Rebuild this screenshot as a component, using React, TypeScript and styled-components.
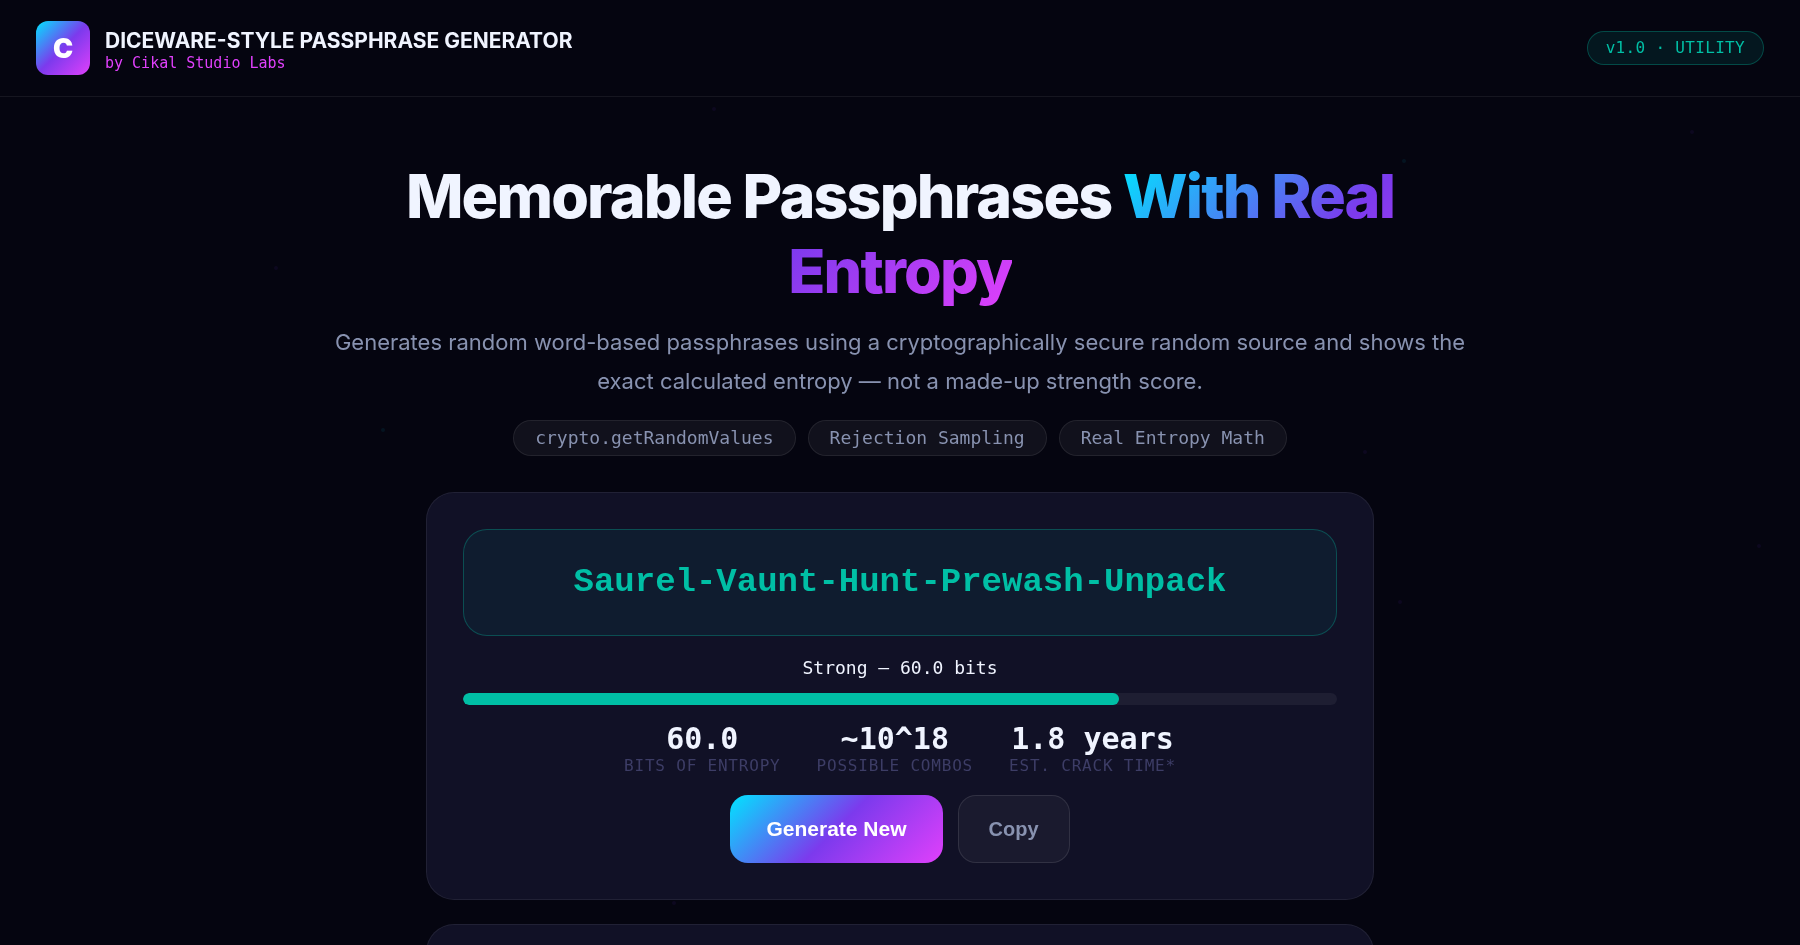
import React, { useState } from "react";
import styled, { createGlobalStyle, css } from "styled-components";

const sans = `Inter, "Liberation Sans", sans-serif`;
const mono = `"DejaVu Sans Mono", "Liberation Mono", monospace`;
const brandGradient = "linear-gradient(135deg, #00e5ff, #7c3aed 50%, #e040fb)";

const GlobalStyle = createGlobalStyle`
  *, *::before, *::after { box-sizing: border-box; }
  html { background: #050510; scrollbar-width: none; }
  body {
    margin: 0;
    font-family: ${sans};
    color: #f0f4ff;
    -webkit-font-smoothing: antialiased;
  }
  h1, p, dl, dd, dt { margin: 0; }
`;

const Particles = styled.svg`
  position: fixed;
  inset: 0;
  width: 100%;
  height: 100%;
  z-index: -1;
`;

const Header = styled.header`
  display: flex;
  align-items: center;
  justify-content: space-between;
  padding: 21px 36px;
  border-bottom: 1px solid rgba(255, 255, 255, 0.07);
`;

const Brand = styled.div`
  display: flex;
  align-items: center;
  gap: 15px;
`;

const Logo = styled.div`
  display: flex;
  align-items: center;
  justify-content: center;
  width: 54px;
  height: 54px;
  border-radius: 12px;
  background: ${brandGradient};
  color: #fff;
  font-size: 27px;
  font-weight: 900;
`;

const BrandTitle = styled.div`
  padding-top: 4px;
  font-size: 21px;
  line-height: 25px;
  font-weight: 700;
`;

const BrandBy = styled.div`
  font-family: ${mono};
  font-size: 15px;
  line-height: 20px;
  color: #e040fb;
`;

const Version = styled.span`
  padding: 7px 18px;
  border: 1px solid rgba(0, 191, 165, 0.3);
  border-radius: 36px;
  background: rgba(0, 191, 165, 0.1);
  color: #00bfa5;
  font-family: ${mono};
  font-size: 16px;
  line-height: 18px;
  letter-spacing: 0.02em;
`;

const Main = styled.main`
  display: flex;
  flex-direction: column;
  align-items: center;
  padding: 62px 36px 72px;
`;

const Headline = styled.h1`
  max-width: 1116px;
  font-size: 61px;
  line-height: 75px;
  font-weight: 800;
  letter-spacing: -0.03em;
  text-align: center;
`;

const Gradient = styled.span`
  background: ${brandGradient};
  background-clip: text;
  -webkit-background-clip: text;
  color: transparent;
`;

const Lead = styled.p`
  max-width: 1134px;
  margin-top: 14px;
  color: #8892b0;
  font-size: 22px;
  line-height: 39px;
  text-align: center;
`;

const Tags = styled.div`
  display: flex;
  flex-wrap: wrap;
  justify-content: center;
  gap: 12px;
  margin: 19px 0 36px;
`;

const Tag = styled.span`
  padding: 7px 21px;
  border: 1px solid rgba(255, 255, 255, 0.08);
  border-radius: 36px;
  background: rgba(255, 255, 255, 0.05);
  color: #8892b0;
  font-family: ${mono};
  font-size: 18px;
  line-height: 20px;
`;

const Card = styled.section`
  width: 100%;
  max-width: 948px;
  min-height: 144px;
  padding: 36px;
  border: 1px solid rgba(255, 255, 255, 0.07);
  border-radius: 28px;
  background: #111126;

  & + & {
    margin-top: 24px;
  }
`;

const Passphrase = styled.output`
  display: block;
  padding: 30px 36px;
  border: 1px solid rgba(0, 191, 165, 0.3);
  border-radius: 24px;
  background: rgba(0, 191, 165, 0.07);
  color: #00bfa5;
  font-family: "Courier New", "Liberation Mono", monospace;
  font-size: 34px;
  line-height: 45px;
  font-weight: 700;
  text-align: center;
`;

const Strength = styled.p`
  margin-top: 20px;
  font-family: ${mono};
  font-size: 18px;
  line-height: 24px;
  text-align: center;
`;

const Meter = styled.div`
  height: 12px;
  margin-top: 13px;
  border-radius: 6px;
  background: #1e1e32;
  overflow: hidden;
`;

const MeterFill = styled.div`
  height: 100%;
  border-radius: 6px;
  background: #00bfa5;
`;

const Stats = styled.dl`
  display: flex;
  flex-wrap: wrap;
  justify-content: center;
  gap: 36px;
  margin-top: 17px;
`;

const Stat = styled.div`
  display: flex;
  flex-direction: column-reverse;
  align-items: center;
  font-family: ${mono};
`;

const StatValue = styled.dd`
  font-size: 30px;
  line-height: 34px;
  font-weight: 700;
`;

const StatLabel = styled.dt`
  color: #3d3d66;
  font-size: 16px;
  line-height: 20px;
  letter-spacing: 0.05em;
  text-transform: uppercase;
`;

const Actions = styled.div`
  display: flex;
  flex-wrap: wrap;
  justify-content: center;
  gap: 15px;
  margin-top: 19px;
`;

const Button = styled.button<{ $primary?: boolean }>`
  padding: 21px 30px;
  border: 1px solid rgba(255, 255, 255, 0.1);
  border-radius: 18px;
  background: #1a1a2e;
  color: #8892b0;
  font-family: "Liberation Sans", Arial, sans-serif;
  font-size: 20px;
  line-height: 24px;
  font-weight: 700;
  cursor: pointer;

  ${({ $primary }) =>
    $primary &&
    css`
      padding: 22px 36px;
      border: 0;
      background: ${brandGradient};
      color: #fff;
      font-size: 21px;
    `}
`;

const particles = [
  { x: 1692, y: 132, fill: "#7c3aed" },
  { x: 1404, y: 161, fill: "#00e5ff" },
  { x: 714, y: 109, fill: "#7c3aed" },
  { x: 276, y: 268, fill: "#7c3aed" },
  { x: 383, y: 430, fill: "#00e5ff" },
  { x: 1365, y: 452, fill: "#7c3aed" },
  { x: 1759, y: 546, fill: "#7c3aed" },
  { x: 1400, y: 602, fill: "#7c3aed" },
  { x: 674, y: 903, fill: "#7c3aed" },
];

const stats = [
  { label: "Bits of entropy", value: "60.0" },
  { label: "Possible combos", value: "~10^18" },
  { label: "Est. crack time*", value: "1.8 years" },
];

const samples = [
  "Saurel-Vaunt-Hunt-Prewash-Unpack",
  "Cobalt-Ridge-Lamp-Thistle-Marble",
  "Walnut-Crisp-Tide-Orchard-Beacon",
];

export default function App() {
  const [index, setIndex] = useState(0);
  const passphrase = samples[index];
  const strength = 75;

  return (
    <>
      <GlobalStyle />
      <Particles aria-hidden="true">
        {particles.map((p) => (
          <circle key={`${p.x}-${p.y}`} cx={p.x} cy={p.y} r={2} fill={p.fill} opacity={0.07} />
        ))}
      </Particles>
      <Header>
        <Brand>
          <Logo>C</Logo>
          <div>
            <BrandTitle>DICEWARE-STYLE PASSPHRASE GENERATOR</BrandTitle>
            <BrandBy>by Cikal Studio Labs</BrandBy>
          </div>
        </Brand>
        <Version>v1.0 · UTILITY</Version>
      </Header>
      <Main>
        <Headline>
          Memorable Passphrases <Gradient>With Real Entropy</Gradient>
        </Headline>
        <Lead>
          Generates random word-based passphrases using a cryptographically secure random source and
          shows the exact calculated entropy — not a made-up strength score.
        </Lead>
        <Tags>
          <Tag>crypto.getRandomValues</Tag>
          <Tag>Rejection Sampling</Tag>
          <Tag>Real Entropy Math</Tag>
        </Tags>
        <Card>
          <Passphrase>{passphrase}</Passphrase>
          <Strength>Strong — 60.0 bits</Strength>
          <Meter>
            <MeterFill style={{ width: `${strength}%` }} />
          </Meter>
          <Stats>
            {stats.map((s) => (
              <Stat key={s.label}>
                <StatLabel>{s.label}</StatLabel>
                <StatValue>{s.value}</StatValue>
              </Stat>
            ))}
          </Stats>
          <Actions>
            <Button $primary type="button" onClick={() => setIndex((index + 1) % samples.length)}>
              Generate New
            </Button>
            <Button type="button" onClick={() => navigator.clipboard?.writeText(passphrase)}>
              Copy
            </Button>
          </Actions>
        </Card>
        <Card />
      </Main>
    </>
  );
}
